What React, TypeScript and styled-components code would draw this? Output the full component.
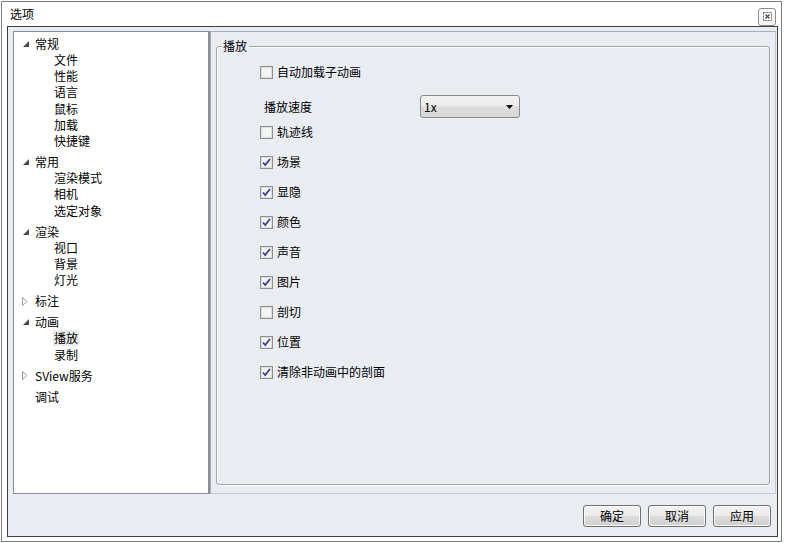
import React from "react";
import styled, { createGlobalStyle } from "styled-components";

const Global = createGlobalStyle`
  html, body { margin: 0; padding: 0; background: #ffffff; }
  body { font-family: "Noto Sans CJK SC", "Microsoft YaHei", "Noto Sans", sans-serif; font-size: 12px; color: #000; }
  * { box-sizing: border-box; }
`;

const FONT = `"Noto Sans CJK SC", "Noto Sans", sans-serif`;

const Window = styled.div`
  margin: 1px 0 0 1px;
  width: 781px;
  height: 541px;
  border: 1px solid #7d7d7d;
  background: #ffffff;
  display: flex;
  flex-direction: column;
  padding: 0 3px 4px 5px;
`;

const TitleBar = styled.div`
  height: 24px;
  display: flex;
  align-items: center;
  justify-content: space-between;
  padding: 0 2px 0 3px;
`;

const TitleText = styled.span`
  font-family: ${FONT};
  font-size: 12px;
  line-height: 16px;
`;

const CloseBtn = styled.div`
  width: 18px;
  height: 18px;
  border: 1px solid #8c8c8c;
  border-radius: 3px;
  background: linear-gradient(#ffffff, #f4f4f4);
  display: flex;
  align-items: center;
  justify-content: center;
  margin-top: 5px;
`;

const Frame = styled.div`
  flex: 1;
  border: 1px solid #3f3f3f;
  background: #e9ecf1;
  display: flex;
  flex-direction: column;
  padding: 4px 1px 9px 5px;
`;

const Main = styled.div`
  height: 463px;
  display: flex;
`;

const Tree = styled.div`
  width: 197px;
  background: #ffffff;
  border: 1px solid #8a8f96;
  border-right: 2px solid #8e9095;
  overflow: hidden;
`;

const TreeList = styled.div`
  margin-top: -1px;
`;

const HeaderRow = styled.div`
  height: 21px;
  display: flex;
  align-items: flex-end;
`;

const HeaderInner = styled.div`
  height: 16px;
  display: flex;
  align-items: center;
`;

const ArrowSlot = styled.div`
  width: 21px;
  display: flex;
  justify-content: flex-end;
  padding-right: 6px;
  align-items: center;
`;

const ItemText = styled.span<{ $selected?: boolean }>`
  font-family: ${FONT};
  font-size: 12px;
  line-height: 16px;
  padding: 0 1px;
  margin-left: -1px;
  background: ${(p) => (p.$selected ? "#ebebeb" : "transparent")};
`;

const ChildRow = styled.div`
  height: 16.2px;
  display: flex;
  align-items: center;
  padding-left: 40px;
`;

const Right = styled.div`
  flex: 1;
  border: 1px solid #a7acb3;
  border-right-color: #c4c8ce;
  border-bottom-color: #c4c8ce;
  padding: 14px 5px 8px 5px;
  display: flex;
`;

const GroupBox = styled.div`
  flex: 1;
  position: relative;
  border: 1px solid #9fa4aa;
  border-radius: 3px;
  box-shadow: 1px 1px 0 #ffffff, inset 1px 1px 0 #ffffff;
  padding: 10px 0 0 43px;
  display: flex;
  flex-direction: column;
`;

const GroupTitle = styled.span`
  position: absolute;
  top: -9px;
  left: 5px;
  padding: 0 2px 0 1px;
  background: #e9ecf1;
  font-family: ${FONT};
  font-size: 12px;
  line-height: 16px;
`;

const CheckRow = styled.div`
  height: 30px;
  display: flex;
  align-items: center;
  gap: 4px;
`;

const Box = styled.span<{ $checked?: boolean }>`
  width: 13px;
  height: 13px;
  border: 1px solid #8e8f8f;
  background: #f4f4f4;
  box-shadow: inset 0 0 0 1px #dcdcdc;
  display: flex;
  align-items: center;
  justify-content: center;
`;

const Label = styled.span`
  font-family: ${FONT};
  font-size: 12px;
  line-height: 16px;
`;

const SpeedRow = styled.div`
  display: flex;
  align-items: flex-start;
  padding: 8px 0 0 4px;
  height: 30px;
`;

const SpeedLabel = styled.span`
  width: 156px;
  font-family: ${FONT};
  font-size: 12px;
  line-height: 16px;
  padding-top: 4px;
`;

const Combo = styled.div`
  width: 100px;
  height: 23px;
  flex-shrink: 0;
  border: 1px solid #8b8b8b;
  border-radius: 3px;
  background: linear-gradient(#f3f3f3 0%, #ebebeb 45%, #dddddd 55%, #d6d6d6 100%);
  display: flex;
  align-items: center;
  justify-content: space-between;
  padding: 0 6px 0 3px;
  font-family: ${FONT};
  font-size: 12px;
`;

const ButtonBar = styled.div`
  flex: 1;
  display: flex;
  justify-content: flex-end;
  align-items: flex-end;
  gap: 7px;
  padding-right: 5px;
`;

const Button = styled.div`
  width: 58px;
  height: 22px;
  border: 1px solid #707070;
  border-radius: 3px;
  background: linear-gradient(#f2f2f2 0%, #ebebeb 50%, #dddddd 51%, #cfcfcf 100%);
  box-shadow: inset 0 0 0 1px #fbfbfb;
  display: flex;
  align-items: center;
  justify-content: center;
  font-family: ${FONT};
  font-size: 12px;
  line-height: 16px;
`;

const Expanded = () => (
  <svg width="6" height="6" viewBox="0 0 6 6">
    <path d="M6 0 L6 6 L0 6 Z" fill="#4a4a4a" />
  </svg>
);

const Collapsed = () => (
  <svg width="6" height="9" viewBox="0 0 6 9" style={{ marginRight: 1 }}>
    <path d="M0.5 0.5 L5 4.5 L0.5 8.5 Z" fill="#ffffff" stroke="#9a9a9a" strokeWidth="1" />
  </svg>
);

const Check = () => (
  <svg width="9" height="9" viewBox="0 0 9 9">
    <path d="M1 4.5 L3.2 7 L8 1" fill="none" stroke="#3b3f8c" strokeWidth="1.8" />
  </svg>
);

const CloseIcon = () => (
  <svg width="9" height="9" viewBox="0 0 9 9">
    <rect x="0.5" y="0.5" width="8" height="8" fill="none" stroke="#6a6a6a" strokeWidth="1" strokeDasharray="2 1" />
    <path d="M2.5 2.5 L6.5 6.5 M6.5 2.5 L2.5 6.5" stroke="#4a4a4a" strokeWidth="1.2" />
  </svg>
);

type Node = { label: string; expanded?: boolean; leaf?: boolean; children?: string[] };

const tree: Node[] = [
  { label: "常规", expanded: true, children: ["文件", "性能", "语言", "鼠标", "加载", "快捷键"] },
  { label: "常用", expanded: true, children: ["渲染模式", "相机", "选定对象"] },
  { label: "渲染", expanded: true, children: ["视口", "背景", "灯光"] },
  { label: "标注", expanded: false },
  { label: "动画", expanded: true, children: ["播放", "录制"] },
  { label: "SView服务", expanded: false },
  { label: "调试", leaf: true },
];

const checks: { label: string; checked: boolean }[] = [
  { label: "轨迹线", checked: false },
  { label: "场景", checked: true },
  { label: "显隐", checked: true },
  { label: "颜色", checked: true },
  { label: "声音", checked: true },
  { label: "图片", checked: true },
  { label: "剖切", checked: false },
  { label: "位置", checked: true },
  { label: "清除非动画中的剖面", checked: true },
];

const CheckItem = ({ label, checked }: { label: string; checked: boolean }) => (
  <CheckRow>
    <Box $checked={checked}>{checked ? <Check /> : null}</Box>
    <Label>{label}</Label>
  </CheckRow>
);

export default function App() {
  return (
    <>
      <Global />
      <Window>
        <TitleBar>
          <TitleText>选项</TitleText>
          <CloseBtn>
            <CloseIcon />
          </CloseBtn>
        </TitleBar>
        <Frame>
          <Main>
            <Tree>
              <TreeList>
                {tree.map((n) => (
                  <React.Fragment key={n.label}>
                    <HeaderRow>
                      <HeaderInner>
                        <ArrowSlot>{n.leaf ? null : n.expanded ? <Expanded /> : <Collapsed />}</ArrowSlot>
                        <ItemText>{n.label}</ItemText>
                      </HeaderInner>
                    </HeaderRow>
                    {n.expanded &&
                      n.children?.map((c) => (
                        <ChildRow key={c}>
                          <ItemText $selected={c === "播放"}>{c}</ItemText>
                        </ChildRow>
                      ))}
                  </React.Fragment>
                ))}
              </TreeList>
            </Tree>
            <Right>
              <GroupBox>
                <GroupTitle>播放</GroupTitle>
                <CheckItem label="自动加载子动画" checked={false} />
                <SpeedRow>
                  <SpeedLabel>播放速度</SpeedLabel>
                  <Combo>
                    <span>1x</span>
                    <svg width="7" height="4" viewBox="0 0 7 4">
                      <path d="M0 0 L7 0 L3.5 4 Z" fill="#000" />
                    </svg>
                  </Combo>
                </SpeedRow>
                {checks.map((c) => (
                  <CheckItem key={c.label} label={c.label} checked={c.checked} />
                ))}
              </GroupBox>
            </Right>
          </Main>
          <ButtonBar>
            <Button>确定</Button>
            <Button>取消</Button>
            <Button>应用</Button>
          </ButtonBar>
        </Frame>
      </Window>
    </>
  );
}
